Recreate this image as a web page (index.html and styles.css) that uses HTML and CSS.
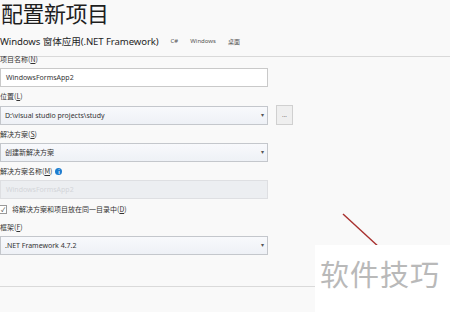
FILE: index.html
```html
<!DOCTYPE html>
<html lang="zh-CN">
<head>
    <meta charset="UTF-8">
    <title>配置新项目</title>
    <link rel="stylesheet" href="styles.css">
</head>
<body>

    <div class="header">
        <h1>配置新项目</h1>
        <div class="subtitle">
            <span class="app-name">Windows 窗体应用(.NET Framework)</span>
            <span class="tag">C#</span>
            <span class="tag">Windows</span>
            <span class="tag">桌面</span>
        </div>
    </div>

    <div class="form">
        <div class="group">
            <div class="label">项目名称(<u>N</u>)</div>
            <div class="field">WindowsFormsApp2</div>
        </div>

        <div class="group">
            <div class="label">位置(<u>L</u>)</div>
            <div class="row">
                <div class="field select">D:\visual studio projects\study<span class="arrow">▾</span></div>
                <button class="browse">...</button>
            </div>
        </div>

        <div class="group">
            <div class="label">解决方案(<u>S</u>)</div>
            <div class="field select">创建新解决方案<span class="arrow">▾</span></div>
        </div>

        <div class="group">
            <div class="label">解决方案名称(<u>M</u>) <span class="info">i</span></div>
            <div class="field disabled">WindowsFormsApp2</div>
        </div>

        <div class="check-row">
            <span class="checkbox">✓</span>
            <span>将解决方案和项目放在同一目录中(<u>D</u>)</span>
        </div>

        <div class="group">
            <div class="label">框架(<u>F</u>)</div>
            <div class="field select">.NET Framework 4.7.2<span class="arrow">▾</span></div>
        </div>
    </div>

    <div class="footer-line"></div>

    <!-- annotation drawn over the screenshot -->
    <svg class="pointer" width="60" height="50" viewBox="0 0 60 50">
        <line x1="3" y1="4" x2="40" y2="38" stroke="#a8302e" stroke-width="1.4" />
    </svg>

    <div class="watermark">软件技巧</div>

</body>
</html>
```

FILE: styles.css
```css
body {
    margin: 0;
    padding: 0;
    background-color: #f9f9f9;
    color: #1e1e1e;
    font-family: "Noto Sans", "Noto Sans CJK SC", sans-serif;
    width: 450px;
    height: 312px;
    overflow: hidden;
    position: relative;
}

.header {
    height: 56px;
    border-bottom: 1px solid #d9d9d9;
}

h1 {
    margin: 0;
    padding-left: 1px;
    font-family: "Noto Sans CJK SC", sans-serif;
    font-weight: 400;
    font-size: 22px;
    line-height: 24px;
    letter-spacing: -0.5px;
}

.subtitle {
    display: flex;
    align-items: center;
    margin-top: 9px;
    height: 16px;
}

.app-name {
    font-size: 9.6px;
    letter-spacing: -0.1px;
}

.tag {
    font-size: 6px;
    color: #555;
    margin-left: 12px;
}

.tag:first-of-type {
    margin-left: 11px;
}

.form {
    margin-top: -3px;
    width: 300px;
}

.group {
    margin-bottom: 4px;
}

.label {
    font-family: "Noto Sans CJK SC", sans-serif;
    font-size: 7px;
    line-height: 10px;
    height: 10px;
    margin-bottom: 4px;
    color: #333;
    display: flex;
    align-items: center;
}

.label u {
    text-decoration: underline;
}

.info {
    display: inline-block;
    width: 7px;
    height: 7px;
    border-radius: 50%;
    background-color: #1c7ccf;
    color: white;
    font-size: 5px;
    line-height: 7px;
    text-align: center;
    font-weight: bold;
    margin-left: 3px;
}

.row {
    display: flex;
    align-items: center;
    gap: 8px;
}

.field {
    width: 268px;
    height: 19px;
    box-sizing: border-box;
    border: 1px solid #c9c9c9;
    background-color: #ffffff;
    font-size: 7px;
    line-height: 17px;
    padding-left: 5px;
    color: #333;
    position: relative;
}

.select {
    background: linear-gradient(#f8f9fc, #eef1f6);
    border-color: #c4c7cc;
    padding-left: 4px;
    font-family: "Noto Sans", "Noto Sans CJK SC", sans-serif;
}

.arrow {
    position: absolute;
    right: 3px;
    top: 0;
    font-size: 6px;
    color: #555;
}

.disabled {
    background-color: #eceef1;
    border-color: #dedfe2;
    color: #d3d5d9;
}

.browse {
    width: 17px;
    height: 20px;
    padding: 0;
    border: 1px solid #d0d0d0;
    background-color: #efefef;
    font-size: 6px;
    color: #555;
    font-family: "Noto Sans", sans-serif;
}

.check-row {
    display: flex;
    align-items: center;
    height: 12px;
    margin-bottom: 7px;
    font-family: "Noto Sans CJK SC", sans-serif;
    font-size: 7px;
    color: #333;
}

.checkbox {
    width: 6px;
    height: 7px;
    border: 1px solid #999;
    border-left: none;
    background: white;
    font-size: 6px;
    line-height: 7px;
    text-align: center;
    margin-right: 5px;
    color: #222;
}

.footer-line {
    margin-top: 31px;
    border-top: 1px solid #dadada;
}

.pointer {
    position: absolute;
    left: 340px;
    top: 210px;
}

.watermark {
    position: absolute;
    left: 315px;
    top: 245px;
    width: 135px;
    height: 67px;
    background-color: #ffffff;
    font-family: "Noto Sans CJK SC", sans-serif;
    font-size: 29px;
    line-height: 56px;
    color: #b9b9b9;
    padding-left: 5px;
    box-sizing: border-box;
    letter-spacing: 1px;
}
```
